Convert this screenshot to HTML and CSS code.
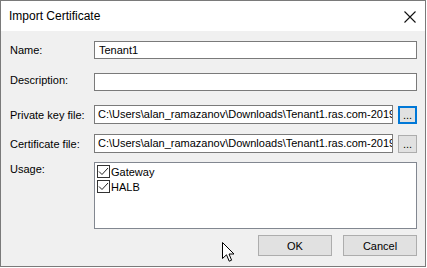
FILE: index.html
```html
<!doctype html>
<html>
  <head>
    <meta charset="utf-8">
    <title>Import Certificate</title>
    <link rel="stylesheet" href="styles.css">
  </head>
  <body>
    <div class="dialog">
      <header class="titlebar">
        <span class="title">Import Certificate</span>
        <svg class="close" width="12" height="12" viewBox="0 0 12 12">
          <path d="M0.5 0.5 L11.5 11.5 M11.5 0.5 L0.5 11.5" stroke="#111" stroke-width="1.1" fill="none"/>
        </svg>
      </header>

      <main class="content">
        <div class="row row-name">
          <label class="label">Name:</label>
          <div class="field">Tenant1</div>
        </div>

        <div class="row row-desc">
          <label class="label label-top">Description:</label>
          <div class="field"></div>
        </div>

        <div class="row row-key">
          <label class="label">Private key file:</label>
          <div class="field path">C:\Users\alan_ramazanov\Downloads\Tenant1.ras.com-2019</div>
          <button class="browse focused">...</button>
        </div>

        <div class="row row-cert">
          <label class="label">Certificate file:</label>
          <div class="field path">C:\Users\alan_ramazanov\Downloads\Tenant1.ras.com-2019</div>
          <button class="browse">...</button>
        </div>

        <div class="row row-usage">
          <label class="label label-top">Usage:</label>
          <div class="listbox">
            <div class="check-item">
              <span class="checkbox"><svg width="11" height="11" viewBox="0 0 11 11"><path d="M1 5.5 L4 8.5 L10 2" stroke="#222" stroke-width="1" fill="none"/></svg></span>
              <span>Gateway</span>
            </div>
            <div class="check-item">
              <span class="checkbox"><svg width="11" height="11" viewBox="0 0 11 11"><path d="M1 5.5 L4 8.5 L10 2" stroke="#222" stroke-width="1" fill="none"/></svg></span>
              <span>HALB</span>
            </div>
          </div>
        </div>

        <div class="actions">
          <button class="btn">OK</button>
          <button class="btn">Cancel</button>
        </div>
      </main>

      <svg class="cursor" width="13" height="21" viewBox="0 0 13 21">
        <path d="M0.5 0.5 L0.5 16.5 L4.5 12.8 L7.2 19.2 L9.6 18.2 L7 12 L12 12 Z" fill="#fff" stroke="#000" stroke-width="1" stroke-linejoin="miter"/>
      </svg>
    </div>
  </body>
</html>
```

FILE: styles.css
```css
* {
  box-sizing: border-box;
}

html, body {
  margin: 0;
  background: #fff;
  font-family: "Liberation Sans", Arial, sans-serif;
  font-size: 11px;
  color: #000;
}

.dialog {
  position: relative;
  width: 426px;
  height: 267px;
  border: 1px solid #7a7a7a;
  display: flex;
  flex-direction: column;
}

.titlebar {
  flex: 0 0 30px;
  background: #fff;
  display: flex;
  align-items: center;
  justify-content: space-between;
  padding: 0 9px 0 8px;
}

.title {
  font-size: 12px;
  margin-top: -1px;
}

.close {
  margin-top: 1px;
}

.content {
  flex: 1 1 auto;
  background: #f0f0f0;
  padding: 10px 8px 0 9px;
  display: flex;
  flex-direction: column;
}

.row {
  display: flex;
  align-items: center;
}

.row-desc { margin-top: 14px; }
.row-key { margin-top: 14px; }
.row-cert { margin-top: 10px; }
.row-usage { margin-top: 9px; align-items: flex-start; }

.label {
  flex: 0 0 84px;
  line-height: 16px;
  white-space: nowrap;
}

.label-top {
  align-self: flex-start;
  margin-top: -1px;
}

.field {
  flex: 1 1 auto;
  min-width: 0;
  height: 18px;
  background: #fff;
  border: 1px solid #7a7a7a;
  padding: 0 4px;
  line-height: 16px;
  white-space: nowrap;
  overflow: hidden;
}

.row-key .field,
.row-cert .field {
  height: 19px;
  line-height: 17px;
}

.path {
  padding-left: 3px;
  padding-right: 0;
}

.browse {
  flex: 0 0 19px;
  height: 18px;
  margin-left: 5px;
  padding: 0;
  font: inherit;
  line-height: 12px;
  background: #e1e1e1;
  border: 1px solid #adadad;
}

.browse.focused {
  border: 2px solid #0078d7;
}

.listbox {
  flex: 1 1 auto;
  height: 67px;
  background: #fff;
  border: 1px solid #828790;
  padding: 1px 2px;
}

.check-item {
  display: flex;
  align-items: center;
  height: 15px;
}

.checkbox {
  width: 13px;
  height: 13px;
  border: 1px solid #333;
  background: #fff;
  margin-right: 1px;
  display: flex;
  align-items: center;
  justify-content: center;
}

.actions {
  display: flex;
  justify-content: flex-end;
  gap: 11px;
  margin-top: 6px;
}

.btn {
  width: 74px;
  height: 21px;
  font: inherit;
  background: #e1e1e1;
  border: 1px solid #adadad;
  padding: 0;
}

.cursor {
  position: absolute;
  left: 221px;
  top: 241px;
}
```
